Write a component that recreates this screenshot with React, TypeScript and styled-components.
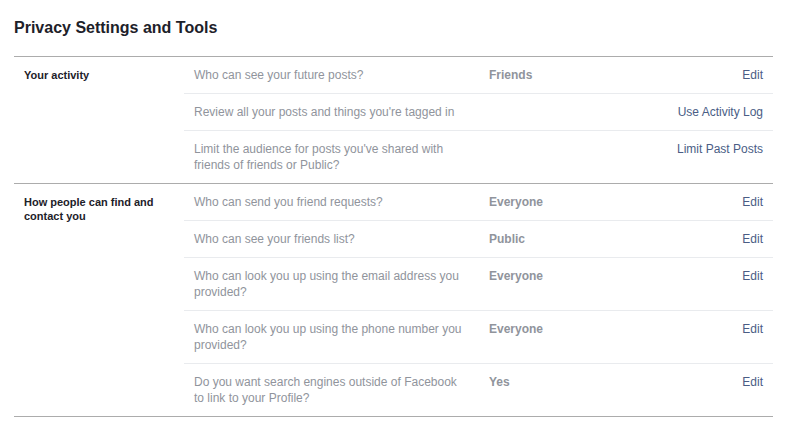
import styled, { createGlobalStyle } from "styled-components";

const GlobalStyle = createGlobalStyle`
  body {
    margin: 0;
    background: #ffffff;
    font-family: "Liberation Sans", Arial, Helvetica, sans-serif;
  }
`;

const Page = styled.div`
  width: 759px;
  padding: 18px 0 0 14px;
`;

const Title = styled.h2`
  margin: 0 0 18px;
  font-size: 16px;
  line-height: 20px;
  font-weight: bold;
  color: #1d2129;
`;

const Section = styled.div`
  display: grid;
  grid-template-columns: 170px 1fr;
  border-top: 1px solid #acacac;
  &:last-child {
    border-bottom: 1px solid #acacac;
  }
`;

const SectionLabel = styled.div`
  padding: 11px 10px 0;
  font-size: 11px;
  line-height: 14px;
  font-weight: bold;
  color: #1d2129;
`;

const Rows = styled.div`
  display: flex;
  flex-direction: column;
`;

const Row = styled.div`
  display: grid;
  grid-template-columns: 295px 1fr auto;
  padding: 10px;
  font-size: 12px;
  line-height: 16px;
  border-top: 1px solid #e9ebee;
  &:first-child {
    border-top: none;
  }
`;

const Question = styled.div`
  color: #90949c;
  padding-right: 22px;
`;

const Value = styled.div`
  color: #90949c;
  font-weight: bold;
`;

const Action = styled.a`
  color: #4a5d85;
  text-align: right;
  text-decoration: none;
  cursor: pointer;
`;

type Item = { q: string; value?: string; action: string };

const sections: { label: string; items: Item[] }[] = [
  {
    label: "Your activity",
    items: [
      { q: "Who can see your future posts?", value: "Friends", action: "Edit" },
      { q: "Review all your posts and things you're tagged in", action: "Use Activity Log" },
      {
        q: "Limit the audience for posts you've shared with friends of friends or Public?",
        action: "Limit Past Posts",
      },
    ],
  },
  {
    label: "How people can find and contact you",
    items: [
      { q: "Who can send you friend requests?", value: "Everyone", action: "Edit" },
      { q: "Who can see your friends list?", value: "Public", action: "Edit" },
      {
        q: "Who can look you up using the email address you provided?",
        value: "Everyone",
        action: "Edit",
      },
      {
        q: "Who can look you up using the phone number you provided?",
        value: "Everyone",
        action: "Edit",
      },
      {
        q: "Do you want search engines outside of Facebook to link to your Profile?",
        value: "Yes",
        action: "Edit",
      },
    ],
  },
];

function App() {
  return (
    <>
      <GlobalStyle />
      <Page>
        <Title>Privacy Settings and Tools</Title>
        {sections.map(s => (
          <Section key={s.label}>
            <SectionLabel>{s.label}</SectionLabel>
            <Rows>
              {s.items.map(item => (
                <Row key={item.q}>
                  <Question>{item.q}</Question>
                  <Value>{item.value}</Value>
                  <Action>{item.action}</Action>
                </Row>
              ))}
            </Rows>
          </Section>
        ))}
      </Page>
    </>
  );
}

export default App;
